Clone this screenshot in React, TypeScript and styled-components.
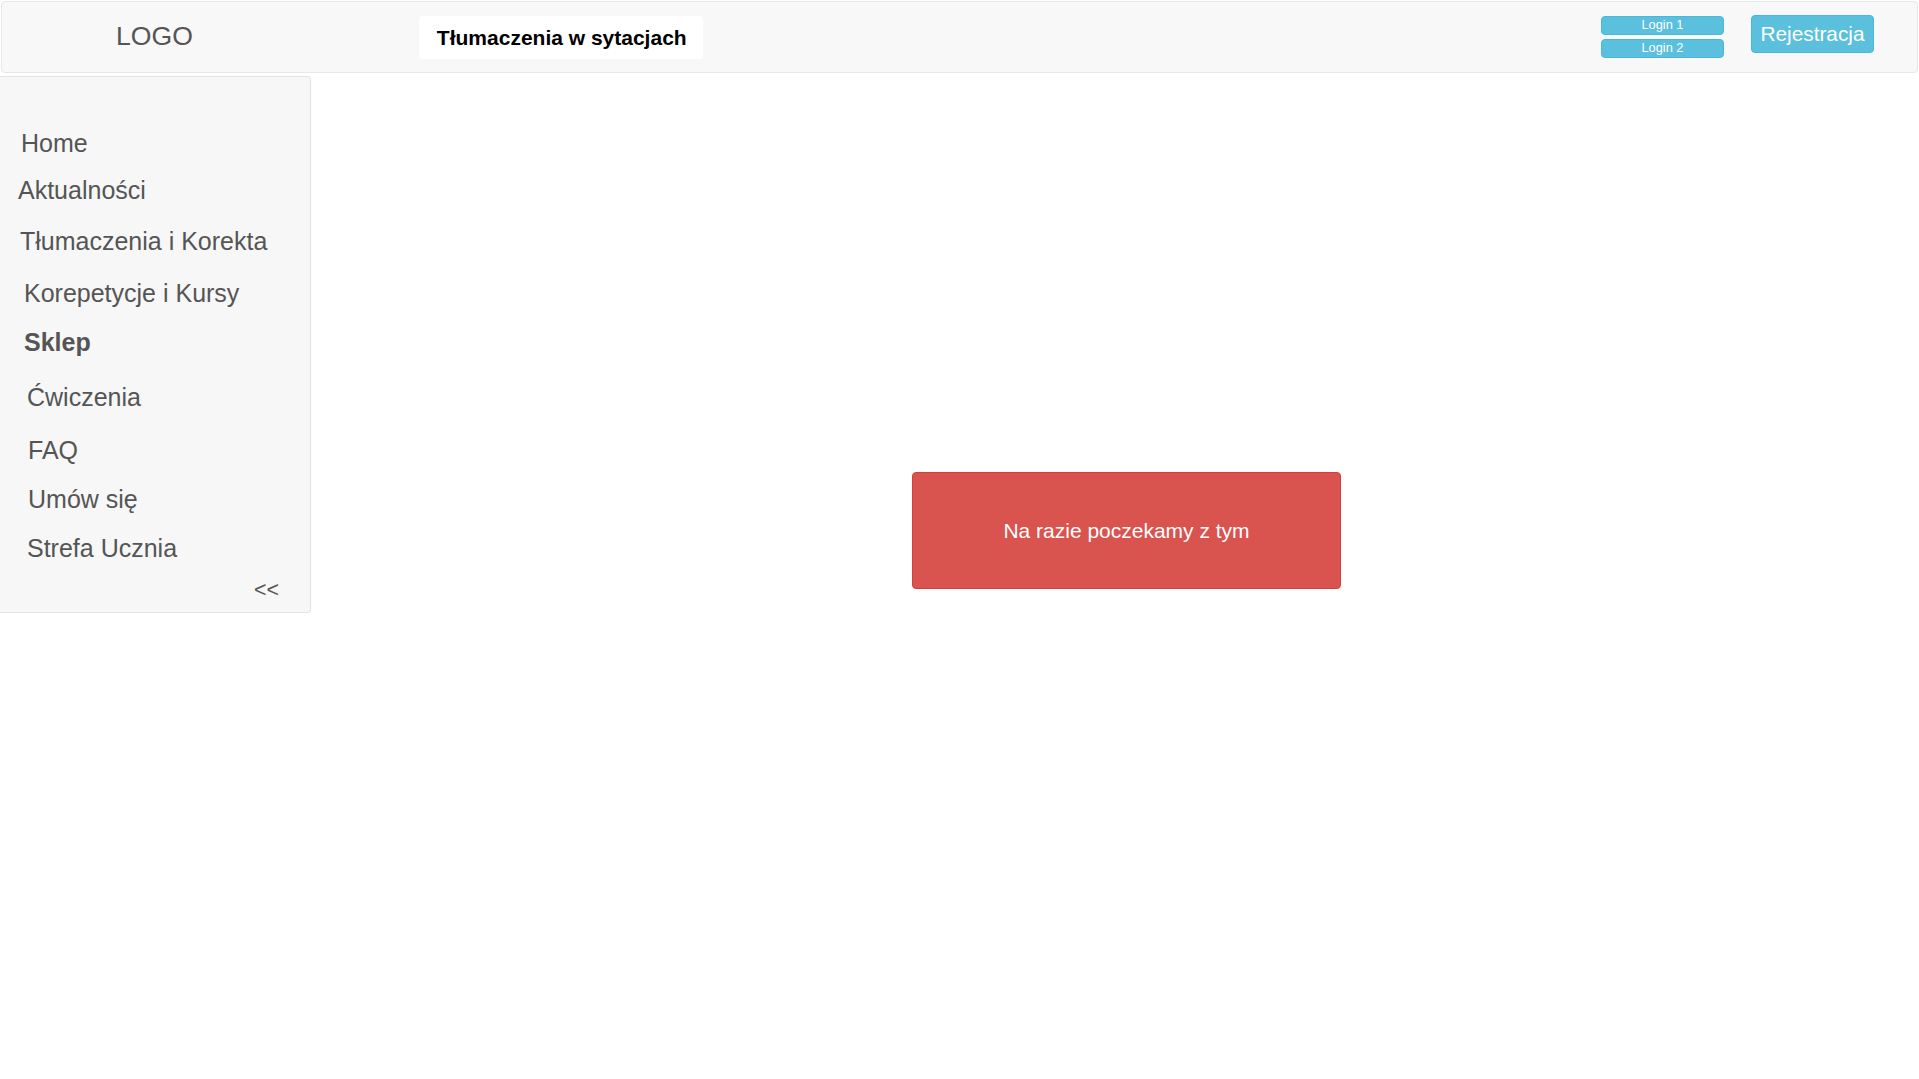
import React from "react";
import styled, { createGlobalStyle } from "styled-components";

const Global = createGlobalStyle`
  html, body { margin: 0; padding: 0; background: #fff; }
  body { font-family: "Liberation Sans", Arial, sans-serif; }
  * { box-sizing: border-box; }
`;

const Page = styled.div`
  width: 1919px;
  min-height: 1079px;
`;

const Navbar = styled.header`
  display: flex;
  align-items: flex-start;
  height: 72px;
  margin: 1px 1px 0 1px;
  padding-right: 43px;
  background: #f8f8f8;
  border: 1px solid #e7e7e7;
  border-radius: 4px;
`;

const Logo = styled.div`
  margin: 18px 0 0 114px;
  font-size: 26.6px;
  line-height: 32px;
  color: #555;
`;

const TitleBox = styled.div`
  margin: 14px 0 0 226px;
  height: 43px;
  padding: 0 16px 0 18px;
  display: flex;
  align-items: center;
  background: #fff;
  border-radius: 4px;
  font-size: 21px;
  font-weight: bold;
  color: #000;
`;

const LoginStack = styled.div`
  margin: 14px 0 0 auto;
  display: flex;
  flex-direction: column;
  gap: 4px;
`;

const InfoButton = styled.button<{ $small?: boolean }>`
  width: 123px;
  height: ${(p) => (p.$small ? "19px" : "38px")};
  padding: 0;
  background: #5bc0de;
  border: 1px solid #46b8da;
  border-radius: 4px;
  color: #fff;
  font-family: "Liberation Sans", Arial, sans-serif;
  font-size: ${(p) => (p.$small ? "12.8px" : "20.8px")};
  line-height: 1;
  display: flex;
  align-items: center;
  justify-content: center;
`;

const RegisterWrap = styled.div`
  margin: 13px 0 0 27px;
`;

const Body = styled.div`
  display: flex;
  align-items: flex-start;
  margin-top: 3px;
`;

const Sidebar = styled.nav`
  width: 311px;
  flex: none;
  padding: 51px 0 10px 0;
  background: #f7f7f7;
  border: 1px solid #e3e3e3;
  border-left: none;
  border-radius: 0 4px 4px 0;
  display: flex;
  flex-direction: column;
`;

const NavItem = styled.a<{ $indent: number; $gap: number; $bold?: boolean }>`
  display: block;
  height: 30px;
  line-height: 30px;
  margin-top: ${(p) => p.$gap}px;
  padding-left: ${(p) => p.$indent}px;
  font-size: 25px;
  font-weight: ${(p) => (p.$bold ? "bold" : "normal")};
  color: #555;
  text-decoration: none;
  white-space: nowrap;
`;

const Collapse = styled.div`
  margin-top: 15px;
  padding-right: 31px;
  text-align: right;
  font-size: 21.4px;
  line-height: 24px;
  color: #555;
`;

const Main = styled.main`
  flex: 1;
  display: flex;
  justify-content: center;
  padding: 396px 0 0 23px;
`;

const Alert = styled.div`
  width: 429px;
  height: 117px;
  display: flex;
  align-items: center;
  justify-content: center;
  background: #d9534f;
  border: 1px solid #d43f3a;
  border-radius: 4px;
  color: #fff;
  font-size: 21px;
`;

const items: { label: string; indent: number; gap: number; bold?: boolean }[] = [
  { label: "Home", indent: 21, gap: 0 },
  { label: "Aktualności", indent: 18, gap: 17 },
  { label: "Tłumaczenia i Korekta", indent: 20, gap: 21 },
  { label: "Korepetycje i Kursy", indent: 24, gap: 22 },
  { label: "Sklep", indent: 24, gap: 19, bold: true },
  { label: "Ćwiczenia", indent: 27, gap: 25 },
  { label: "FAQ", indent: 28, gap: 23 },
  { label: "Umów się", indent: 28, gap: 19 },
  { label: "Strefa Ucznia", indent: 27, gap: 19 },
];

export default function App() {
  return (
    <Page>
      <Global />
      <Navbar>
        <Logo>LOGO</Logo>
        <TitleBox>Tłumaczenia w sytacjach</TitleBox>
        <LoginStack>
          <InfoButton $small>Login 1</InfoButton>
          <InfoButton $small>Login 2</InfoButton>
        </LoginStack>
        <RegisterWrap>
          <InfoButton>Rejestracja</InfoButton>
        </RegisterWrap>
      </Navbar>
      <Body>
        <Sidebar>
          {items.map((it) => (
            <NavItem key={it.label} $indent={it.indent} $gap={it.gap} $bold={it.bold}>
              {it.label}
            </NavItem>
          ))}
          <Collapse>&lt;&lt;</Collapse>
        </Sidebar>
        <Main>
          <Alert>Na razie poczekamy z tym</Alert>
        </Main>
      </Body>
    </Page>
  );
}
